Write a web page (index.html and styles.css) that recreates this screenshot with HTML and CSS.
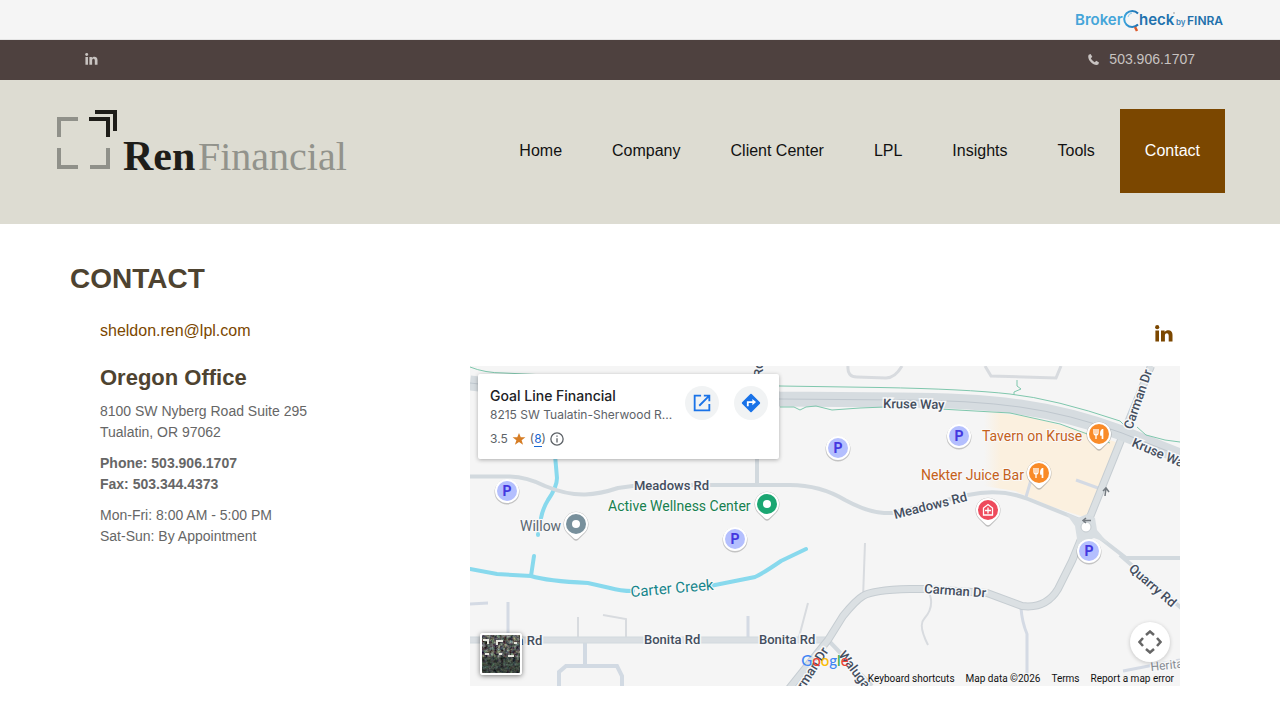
FILE: index.html
```html
<!DOCTYPE html>
<html lang="en">
<head>
<meta charset="utf-8">
<meta name="viewport" content="width=device-width, initial-scale=1">
<title>Contact | Ren Financial</title>
<link rel="stylesheet" href="styles.css">
</head>
<body>
<div class="broker-bar">
  <div class="container broker-inner">
    <a href="#" aria-label="BrokerCheck by FINRA">
      <svg class="broker-logo" viewBox="0 0 150 24">
        <defs><linearGradient id="bc" x1="0" x2="1"><stop offset="0" stop-color="#3aa3dc"/><stop offset="1" stop-color="#1d6fb0"/></linearGradient></defs>
        <text x="0" y="17" class="bk bk-light">Broker</text>
        <text x="64" y="17" class="bk bk-dark">heck</text>
        <path d="M63 5.500A8 8 0 1 0 63 16.500" fill="none" stroke="url(#bc)" stroke-width="2"/>
        <path d="M53 9a5 5 0 0 1 4-4" fill="none" stroke="#8cc9ea" stroke-width="1"/>
        <path d="M60 19l2 4" stroke="#dd5a2b" stroke-width="2.500"/>
        <text x="101" y="17" class="bk-by">by</text>
        <text x="112" y="17" class="bk-finra">FINRA</text>
        <circle cx="99" cy="5" r="1" fill="#bbb"/>
      </svg>
    </a>
  </div>
</div>
<div class="top-bar">
  <div class="container top-inner">
    <a href="#" aria-label="LinkedIn"><svg class="in-small" viewBox="0 0 18 17"><use href="#linkedin"/></svg></a>
    <a href="tel:5039061707" class="top-phone">
      <svg class="phone-icon" viewBox="0 0 12 12"><path d="M2.800 0 .8.800C-.8 3.500 1.300 7.300 3.500 9.200c2.200 2 5.200 3.500 7.700 2.200L12 9.200 9 7.300 7.400 8.900C5.700 8.200 3.900 6.300 3.100 4.600L4.700 3Z" fill="currentColor"/></svg>
      <span>503.906.1707</span>
    </a>
  </div>
</div>
<header class="header">
  <div class="container header-inner">
    <a href="#" class="logo" aria-label="Ren Financial">
      <svg viewBox="0 0 300 70">
        <g fill="none" stroke-width="4">
          <path d="M4 28V10H23M4 39V58H23M35 58H53V39" stroke="#90918a"/>
          <path d="M34 10H53V28M40 3H60V22" stroke="#1e1d19"/>
        </g>
        <text x="68" y="61" class="logo-ren">Ren</text>
        <text x="143" y="61" class="logo-fin">Financial</text>
      </svg>
    </a>
    <nav class="nav">
      <a href="#">Home</a><a href="#">Company</a><a href="#">Client Center</a><a href="#">LPL</a><a href="#">Insights</a><a href="#">Tools</a><a href="#" class="active" aria-current="page">Contact</a>
    </nav>
  </div>
</header>
<main class="container main">
  <h1>CONTACT</h1>
  <div class="contact-grid">
    <section class="details">
      <a href="mailto:sheldon.ren@lpl.com" class="email">sheldon.ren@lpl.com</a>
      <h2>Oregon Office</h2>
      <p>8100 SW Nyberg Road Suite 295<br>Tualatin, OR 97062</p>
      <p class="strong">Phone: 503.906.1707<br>Fax: 503.344.4373</p>
      <p>Mon-Fri: 8:00 AM - 5:00 PM<br>Sat-Sun: By Appointment</p>
    </section>
    <section class="location">
      <a href="#" class="social" aria-label="LinkedIn"><svg class="in-large" viewBox="0 0 18 17">
        <g id="linkedin" fill="currentColor"><circle cx="2.200" cy="2.200" r="2.100"/><path d="M.4 5.500H4V16.500H.4ZM6 5.500H9.600V7C11.500 4.400 17.500 4.500 17.500 10V16.500H13.700V10.800C13.700 7.300 9.900 7.600 9.900 10.500V16.500H6Z"/></g></svg></a>
      <div class="map">
        <svg class="map-canvas" viewBox="470 366 710 320" preserveAspectRatio="xMidYMid slice" role="img" aria-label="Street map">
          <defs>
            <linearGradient id="district" x1="0" x2="1"><stop offset="0" stop-color="#fbf0df" stop-opacity="0"/><stop offset=".12" stop-color="#fbf0df"/></linearGradient>
            <g id="parking"><circle r="12.500" cy="1" fill="#777" opacity=".4"/><circle r="12" fill="#fff"/><circle r="10" fill="#b4bffe"/><text y="5" text-anchor="middle" class="p">P</text></g>
            <g id="pin"><path d="M-9 9-2 16Q0 17.500 2 16L9 9A12.500 12.500 0 1 0-9 9Z" fill="#777" opacity=".45"/><path d="M-8.500 8.500-2 14.500Q0 16 2 14.500L8.500 8.500A12 12 0 1 0-8.500 8.500Z" fill="#fff"/><circle r="10" fill="currentColor"/></g>
            <g id="food" fill="none" stroke="#fff"><path d="M-5-5V-1Q-5 1-3 1Q-1 1-1-1V-5M-3-5V5" stroke-width="1.300"/><path d="M3.500-5V5M3.500-4Q1.500-3 2 1H3.500" stroke-width="1.700" fill="#fff"/></g>
          </defs>
          <path d="M470 366H1180V686H470Z" fill="#f5f5f5"/>
          <path d="M984 411 1030 417 1085 432 1122 444 1090 519 1050 506 1015 491 984 486Z" fill="url(#district)"/>
          <g fill="none" stroke="#d8dbdf" stroke-width="4">
            <path d="M848 366Q847 377 857 377L886 378Q895 378 902 366M985 366 991 376 1056 378 1061 366" stroke-width="3"/>
            <path d="M865 543 863 598M930 595Q934 608 924 619Q918 625 928 645M808 603 799 637M603 615 626 619V638M578 617V638" stroke-width="2"/>
            <path d="M1021 608Q1022 622 1027 634V673M748 616V638M508 602V638M470 604 488 603M1076 480 1098 488M1031 480 1026 497M1123 671 1180 660" stroke="#d4dae4" stroke-width="3"/>
            <path d="M585 642V666M559 686V672L566 666H617L622 676V686" stroke="#d2dae3"/>
          </g>
          <g fill="none" stroke="#88d9ed" stroke-width="4" stroke-linecap="round">
            <path d="M555 455 557 478Q557 487 548 500 543 508 541 518M538 534V535M534 556 531 576M470 569 497 574 531 576Q547 581 588 583L610 588Q620 591 633 591M710 586 755 577Q762 574 781 561L806 549"/>
          </g>
          <g fill="none" stroke="#d2d9de" stroke-width="4" stroke-linejoin="round">
            <path d="M757 455V485M470 476.500H510Q527 477 545 486 567 495 585 494.500 600 494 618 488L640 485H790Q820 485 845 500 867 512 884 513H892L968 495Q1000 488 1028 499L1085 522M1086 527 1126 558H1180M1120 555 1186 612M828 640 872 686"/>
            <path d="M470 640H828" stroke-width="7"/><path d="M470 640H828" stroke="#dadfe3" stroke-width="5"/>
            <path d="M788 690 828 640 843 616Q856 600 863 596 872 590 910 589H927L987 593 1022 606Q1046 609 1058 589L1072 561 1086 527 1123 435 1151 366" stroke="#c6cdd2" stroke-width="8"/>
            <path d="M788 690 828 640 843 616Q856 600 863 596 872 590 910 589H927L987 593 1022 606Q1046 609 1058 589L1072 561 1086 527 1123 435 1151 366" stroke="#dbe0e3" stroke-width="6"/>
            <path d="M470 383Q550 393 620 394L780 399 900 400Q970 400 1020 407 1070 414 1122 433L1180 456" stroke-width="15" stroke="#d6dce0"/>
            <path d="M470 383Q550 393 620 394L780 399 900 400Q970 400 1020 407 1070 414 1122 433L1180 456" stroke-width="1" stroke="#bfc7ce"/>
          </g>
          <path d="M1065 512 1078 518 1087 514 1095 518 1097 530 1108 543 1094 538 1078 545 1075 526Z" fill="#d8dee2"/><circle cx="1086" cy="527" r="5" fill="#fff" stroke="#c4cbd0"/>
          <path d="M1091 520.500H1083M1086 518 1083 520.500 1086 523M1105 496 1106 488M1103 491 1106 488 1109 492" fill="none" stroke="#737a80" stroke-width="1.500"/>
          <g fill="none" stroke="#7fc7ad" stroke-width="1">
            <path d="M470 367Q485 373 504 373L780 386 880 387.500Q965 389 1010 394T1120 421L1124 425M780 407H794L800 410 806 407 816 406 832 410 860 408 885 407M940 409 1010 413 1060 424 1090 435 1110 443M1017 380V386L1021 389 1014 392V395M1137 427 1146 435 1165 440 1180 442"/>
          </g>
          <g class="road">
            <text x="883" y="408" transform="rotate(1 883 408)">Kruse Way</text>
            <text x="634" y="490">Meadows Rd</text>
            <text x="895" y="519" transform="rotate(-14 895 519)">Meadows Rd</text>
            <text x="486" y="645">Bonita Rd</text><text x="644" y="644">Bonita Rd</text><text x="759" y="644">Bonita Rd</text>
            <text x="924" y="593" transform="rotate(4 924 593)">Carman Dr</text>
            <text x="1132" y="430" transform="rotate(-71 1132 430)">Carman Dr</text>
            <text x="1131" y="446" transform="rotate(23 1131 446)">Kruse Way</text>
            <text x="1128" y="570" transform="rotate(41 1128 570)">Quarry Rd</text>
            <text x="829" y="651" text-anchor="end" transform="rotate(-57 829 651)">Carman Dr</text>
            <text x="838" y="655" transform="rotate(53 838 655)">Waluga</text>
            <text x="763" y="377" transform="rotate(-90 763 377)">Rd</text>
            <text x="1151" y="671" class="minor" transform="rotate(-6 1151 671)">Herita</text>
          </g>
          <g class="place">
            <text x="631" y="597" class="water" transform="rotate(-5 631 597)">Carter Creek</text>
            <text x="520" y="531" fill="#5a6772">Willow</text>
            <text x="608" y="511" fill="#17804f">Active Wellness Center</text>
            <text x="982" y="441" fill="#c5611b">Tavern on Kruse</text>
            <text x="921" y="480" fill="#c5611b">Nekter Juice Bar</text>
          </g>
          <use href="#parking" x="507" y="491"/><use href="#parking" x="838" y="448"/><use href="#parking" x="959" y="436"/><use href="#parking" x="735" y="539"/><use href="#parking" x="1089" y="551"/>
          <use href="#pin" x="576" y="524" color="#78909c"/><circle cx="576" cy="524" r="4" fill="#fff"/>
          <use href="#pin" x="767" y="504" color="#1ba672"/><circle cx="767" cy="504" r="4" fill="#fff"/>
          <use href="#pin" x="1099" y="434" color="#f98b28"/><use href="#food" x="1099" y="434"/>
          <use href="#pin" x="1039" y="473" color="#f98b28"/><use href="#food" x="1039" y="473"/>
          <use href="#pin" x="988" y="510" color="#ee4a5c"/>
          <path d="M983.500 515V508L988 504.500 992.500 508V515ZM988 507.500V513.500M985 510.500H991" fill="none" stroke="#fff" stroke-width="1.300"/>
        </svg>
        <article class="place-card">
          <div class="place-copy">
            <h3>Goal Line Financial</h3>
            <p>8215 SW Tualatin-Sherwood R...</p>
            <div class="rating"><span>3.5</span>
              <svg viewBox="0 0 24 24" class="star"><path d="M12 1.500 15 9H23L16.500 14 19 22 12 17.200 5 22 7.500 14 1 9H9Z" fill="#d67d25"/></svg>
              <span>(<a href="#">8</a>)</span>
              <svg viewBox="0 0 16 16" class="info"><circle cx="8" cy="8" r="7" fill="none" stroke="#5e6368" stroke-width="1.500"/><path d="M8 7V12M8 4V5.500" stroke="#5e6368" stroke-width="1.500"/></svg>
            </div>
          </div>
          <a href="#" class="round" aria-label="Open in Maps"><svg viewBox="0 0 24 24"><path d="M11 4H4V20H20V13M14 4H20V10M20 4 9 15" fill="none" stroke="#1a73e8" stroke-width="2"/></svg></a>
          <a href="#" class="round" aria-label="Directions"><svg viewBox="0 0 24 24"><path d="M12 3 21 12 12 21 3 12Z" fill="#1a73e8" stroke="#1a73e8" stroke-width="2" stroke-linejoin="round"/><path d="M8.500 15.500V11H15" fill="none" stroke="#fff" stroke-width="2"/><path d="M13.500 7.500 17.500 11 13.500 14.500Z" fill="#fff"/></svg></a>
        </article>
        <button class="satellite" aria-label="Show satellite imagery">
          <svg viewBox="0 0 38 38"><defs><filter id="trees" x="0" y="0" width="100%" height="100%" color-interpolation-filters="sRGB"><feTurbulence type="fractalNoise" baseFrequency=".32" numOctaves="3" seed="7"/><feColorMatrix values="1.2 0 0 0 -.28 0 1.2 0 0 -.24 0 0 1.2 0 -.3 0 0 0 0 1"/><feColorMatrix type="saturate" values=".2"/></filter></defs>
          <path d="M0 0H38V38H0Z" filter="url(#trees)"/><path d="M0 22H38V38H0Z" fill="#15291f" opacity=".4"/><path d="M1 5H6V9M15 10V6H21M3 19H7M17 19H20M26 21H32M32 8H35" fill="none" stroke="#e5e5dd" stroke-width="2"/></svg>
        </button>
        <div class="google" aria-label="Google"><span class="blue">G</span><span class="red">o</span><span class="yellow">o</span><span class="blue">g</span><span class="green">l</span><span class="red">e</span></div>
        <button class="camera" aria-label="Map camera controls"><svg viewBox="0 0 24 24"><path d="M8 5 12 1.500 16 5M8 19 12 22.500 16 19M5 8 1.500 12 5 16M19 8 22.500 12 19 16" fill="none" stroke="#666" stroke-width="2.500"/></svg></button>
        <div class="map-footer"><button>Keyboard shortcuts</button><span>Map data ©2026</span><a href="#">Terms</a><a href="#">Report a map error</a></div>
      </div>
    </section>
  </div>
</main>
</body>
</html>
```

FILE: styles.css
```css
* { box-sizing: border-box; }
body { margin: 0; background: #fff; color: #666; font: 14px/21px "Liberation Sans", Arial, sans-serif; }
a { color: inherit; text-decoration: none; }
button { border: 0; padding: 0; font: inherit; color: inherit; background: none; cursor: pointer; }
svg { display: block; }
.container { width: 100%; max-width: 1170px; margin: 0 auto; }

.broker-bar { background: #f5f5f5; border-bottom: 1px solid #e4e4e4; }
.broker-inner { display: flex; justify-content: flex-end; align-items: center; height: 39px; }
.broker-logo { width: 150px; height: 24px; overflow: visible; }
.bk { font: 600 15px Inter, sans-serif; }
.bk-light { fill: #45a5d9; }
.bk-dark { fill: #2272ae; }
.bk-by { font: 600 8px Inter, sans-serif; fill: #3c84b9; }
.bk-finra { font: 600 12px Inter, sans-serif; fill: #2170ab; }

.top-bar { background: #4e413f; color: #c8c3c1; }
.top-inner { display: flex; justify-content: space-between; align-items: center; height: 40px; padding: 0 30px 2px; }
.in-small { width: 13px; height: 12px; }
.top-phone { display: flex; align-items: center; gap: 10px; }
.phone-icon { width: 11px; height: 11px; }

.header { background: #dddcd2; }
.header-inner { display: flex; justify-content: space-between; align-items: flex-start; padding: 29px 0 31px; }
.logo svg { width: 300px; height: 70px; overflow: visible; }
.logo-ren { font: bold 42px "Liberation Serif", serif; fill: #1e1d19; }
.logo-fin { font: 40px "Liberation Serif", serif; fill: #92938c; }
.nav { display: flex; }
.nav a { padding: 0 25px; color: #111; font-size: 16px; line-height: 84px; }
.nav .active { background: #7b4700; color: #fff; }

.main { padding: 36px 15px 34px; }
h1 { margin: 0; color: #4e4330; font-size: 28px; line-height: 38px; }
.contact-grid { display: grid; grid-template-columns: 37fr 71fr; padding: 20px 30px 0; }
.email { display: block; color: #7b4700; font-size: 16px; line-height: 26px; }
h2 { margin: 20px 0 9px; color: #4e4330; font-size: 22px; line-height: 28px; }
.details p { margin: 0 0 10px; }
.details .strong { font-weight: bold; }
.location { min-width: 0; }
.social { display: flex; justify-content: flex-end; height: 48px; padding: 7px 7px 0 0; color: #7b4700; }
.in-large { width: 18px; height: 17px; }

.map { position: relative; height: 320px; overflow: hidden; background: #f5f5f5; font-family: Roboto, sans-serif; }
.map-canvas { width: 100%; height: 100%; }
.road { font: 500 13px Roboto, sans-serif; fill: #444e5e; stroke: #f7f8f9; stroke-width: 3px; paint-order: stroke; }
.road .minor { font-size: 12px; font-weight: 400; fill: #858b92; }
.place { font: 14px Roboto, sans-serif; stroke: #f9f9f9; stroke-width: 2px; paint-order: stroke; }
.place .water { font-size: 15px; fill: #16858b; }
.p { font: bold 14px Roboto, sans-serif; fill: #4438e0; }
.place-card { position: absolute; top: 8px; left: 8px; display: flex; gap: 15px; width: 301px; height: 85px; padding: 12px 11px 0 12px; border-radius: 2px; background: #fff; box-shadow: 0 1px 4px rgba(0,0,0,.3); color: #5e6368; font: 12px/16px Inter, sans-serif; }
.place-copy { flex: 1; min-width: 0; white-space: nowrap; }
.place-card h3 { margin: 0 0 2px; color: #202124; font-size: 14px; font-weight: 500; line-height: 20px; }
.place-card p { margin: 0; font-size: 12px; line-height: 14px; }
.rating { display: flex; align-items: center; gap: 4px; margin-top: 9px; }
.rating a { color: #1967d2; border-bottom: 1px solid #1967d2; }
.star, .info { width: 14px; height: 14px; }
.round { display: flex; align-items: center; justify-content: center; flex: none; width: 34px; height: 34px; border-radius: 50%; background: #f1f3f4; }
.round svg { width: 22px; height: 22px; }
.satellite { position: absolute; left: 10px; bottom: 11px; width: 42px; height: 42px; border: 2px solid #fff; border-radius: 3px; overflow: hidden; box-shadow: 0 1px 5px rgba(0,0,0,.5); }
.google { position: absolute; left: 50%; bottom: 16px; transform: translateX(-50%); font: 500 15px/20px Lato, sans-serif; }
.blue { color: #4285f4; } .red { color: #ea4335; } .yellow { color: #fbbc05; } .green { color: #34a853; }
.camera { position: absolute; right: 10px; bottom: 24px; display: grid; place-items: center; width: 40px; height: 40px; border-radius: 50%; background: #fff; box-shadow: 0 1px 4px rgba(0,0,0,.2); }
.camera svg { width: 24px; height: 24px; }
.map-footer { position: absolute; right: 0; bottom: 0; display: flex; gap: 11px; padding: 0 6px; color: #111; font-size: 10px; line-height: 14px; }
```
